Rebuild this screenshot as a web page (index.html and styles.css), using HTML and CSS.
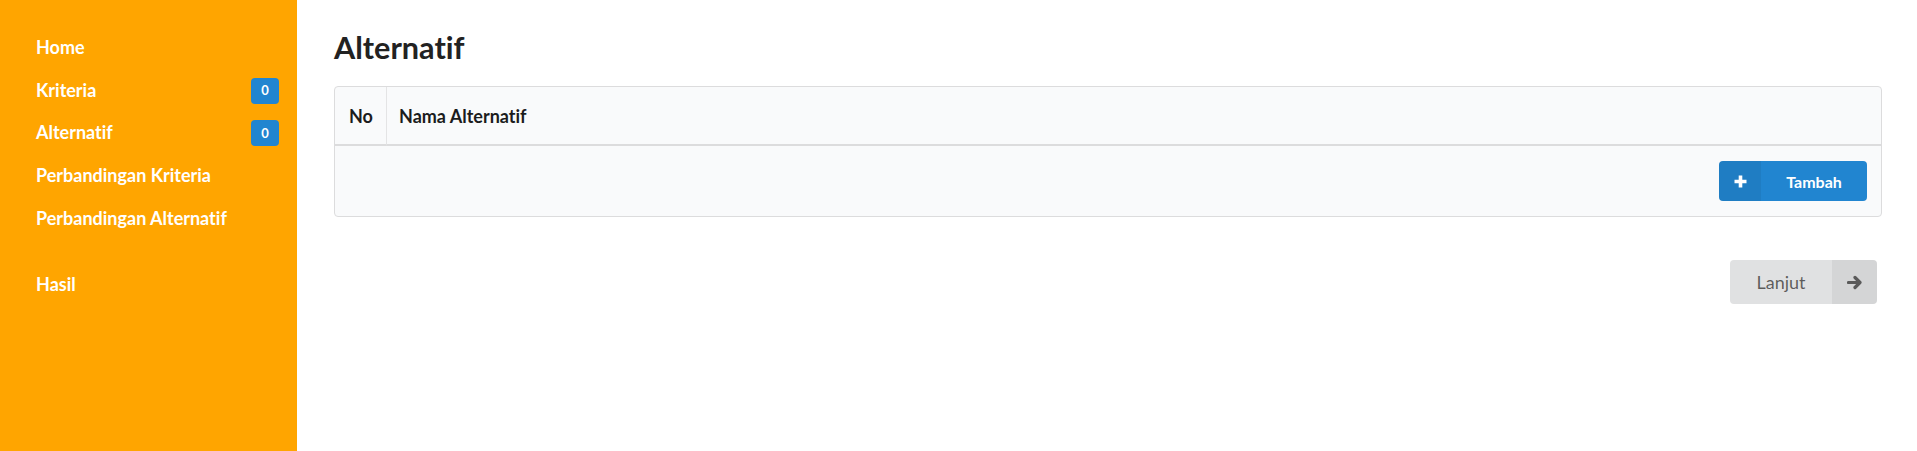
FILE: index.html
```html
<!DOCTYPE html>
<html lang="id">
<head>
<meta charset="utf-8">
<title>Alternatif</title>
<link rel="stylesheet" href="styles.css">
</head>
<body>
<div class="layout">
  <nav class="sidebar">
    <a class="item" href="#">Home</a>
    <a class="item" href="#"><span>Kriteria</span><span class="badge">0</span></a>
    <a class="item" href="#"><span>Alternatif</span><span class="badge">0</span></a>
    <a class="item" href="#">Perbandingan Kriteria</a>
    <a class="item" href="#">Perbandingan Alternatif</a>
    <a class="item item-gap" href="#">Hasil</a>
  </nav>
  <main class="content">
    <h1 class="title">Alternatif</h1>
    <table class="table">
      <thead>
        <tr>
          <th class="col-no">No</th>
          <th>Nama Alternatif</th>
        </tr>
      </thead>
      <tfoot>
        <tr>
          <th colspan="2" class="foot">
            <button class="btn btn-blue"><span class="btn-icon"><svg width="13" height="13" viewBox="0 0 13 13"><path d="M6.5 0.5v12M0.5 6.5h12" stroke="#fff" stroke-width="3.6" fill="none"/></svg></span><span class="btn-text">Tambah</span></button>
          </th>
        </tr>
      </tfoot>
    </table>
    <div class="actions">
      <button class="btn btn-grey"><span class="btn-text">Lanjut</span><span class="btn-icon"><svg width="16" height="15" viewBox="0 0 16 15"><path d="M1.5 7.5h11M8 2.5l5 5-5 5" stroke="#5a5a5a" stroke-width="3.2" fill="none" stroke-linejoin="round" stroke-linecap="round"/></svg></span></button>
    </div>
  </main>
</div>
</body>
</html>
```

FILE: styles.css
```css
* { box-sizing: border-box; }
html, body { margin: 0; padding: 0; }
body {
  font-family: Lato, "Open Sans", "Liberation Sans", sans-serif;
  font-variant-ligatures: no-common-ligatures;
  color: rgba(0,0,0,0.87);
  background: #fff;
}
.layout {
  display: flex;
  height: 451px;
}
.sidebar {
  width: 297px;
  flex: none;
  background: #ffa500;
  display: flex;
  flex-direction: column;
  padding: 26px 18px 0 36px;
}
.item {
  display: flex;
  align-items: center;
  justify-content: space-between;
  height: 42.6px;
  color: #fff;
  text-decoration: none;
  font-weight: 700;
  font-size: 18px;
  line-height: 1;
}
.item-gap { margin-top: 24px; }
.badge {
  display: inline-flex;
  align-items: center;
  justify-content: center;
  width: 28px;
  height: 26px;
  border-radius: 4px;
  background: #2185d0;
  color: #fff;
  font-size: 13px;
  font-weight: 700;
  margin-top: 2px;
}
.content {
  flex: 1;
  padding: 0 35px 0 37px;
}
.title {
  margin: 0;
  padding-top: 31px;
  height: 86px;
  font-size: 30.6px;
  line-height: 34px;
  font-weight: 700;
  color: #222;
}
.table {
  width: 100%;
  border-collapse: separate;
  border-spacing: 0;
  border: 1px solid #dcdcdd;
  border-radius: 4px;
  background: #f9fafb;
}
.table thead th {
  text-align: left;
  font-size: 18px;
  font-weight: 700;
  line-height: 20px;
  padding: 19px 12px 18px;
  border-bottom: 2px solid #dcdcdd;
  color: #1b1c1d;
}
.table thead th.col-no {
  width: 52px;
  padding-left: 14px;
  border-right: 1px solid #e4e4e5;
}
.table tfoot th.foot {
  padding: 15px 14px 15px;
  text-align: right;
}
.btn {
  display: inline-flex;
  align-items: stretch;
  border: none;
  padding: 0;
  border-radius: 4px;
  overflow: hidden;
  font-family: inherit;
  font-weight: 700;
  cursor: pointer;
  vertical-align: top;
}
.btn-blue {
  background: #2185d0;
  color: #fff;
  width: 148px;
  height: 40px;
  font-size: 16px;
}
.btn-blue .btn-icon {
  width: 42px;
  background: rgba(0,0,0,0.06);
  display: flex;
  align-items: center;
  justify-content: center;
}
.btn-blue .btn-text {
  flex: 1;
  display: flex;
  align-items: center;
  justify-content: center;
}
.actions {
  display: flex;
  justify-content: flex-end;
  padding: 43px 5px 0 0;
}
.btn-grey {
  background: #e0e1e2;
  color: rgba(0,0,0,0.6);
  width: 147px;
  height: 44px;
  font-size: 18px;
  font-weight: 400;
}
.btn-grey .btn-text {
  flex: 1;
  display: flex;
  align-items: center;
  justify-content: center;
}
.btn-grey .btn-icon {
  width: 45px;
  background: rgba(0,0,0,0.05);
  display: flex;
  align-items: center;
  justify-content: center;
}
```
